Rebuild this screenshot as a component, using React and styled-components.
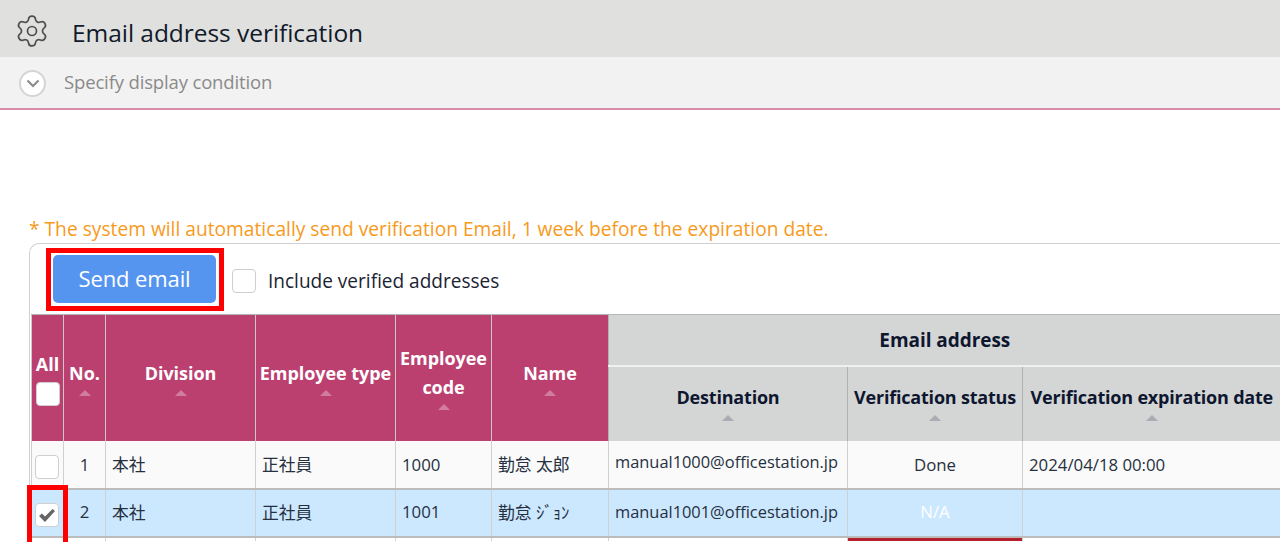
import React from "react";
import styled, { createGlobalStyle } from "styled-components";
import { Settings } from "lucide-react";

const Global = createGlobalStyle`
  html, body { margin: 0; padding: 0; height: 542px; overflow: hidden; background: #fff; }
  body { font-family: "Open Sans", "Noto Sans CJK JP", sans-serif; color: #1b2433; }
  * { box-sizing: border-box; }
`;
const Page = styled.div`width: 1280px; height: 542px; overflow: hidden;`;
const TitleBar = styled.header`
  height: 57px; background: #e0e0de; display: flex; align-items: center; padding: 7px 0 0 14px; gap: 22px;
  svg { color: #505050; flex: none; margin-top: -3px; }
`;
const Title = styled.h1`margin: 0; font-size: 24.5px; font-weight: 400; color: #101a2a; letter-spacing: -0.05px;`;
const ConditionBar = styled.div`
  height: 53px; background: #f2f2f2; border-bottom: 2px solid #d98dab; display: flex; align-items: center; padding: 0 0 3px 19px; gap: 18px;
`;
const Toggle = styled.span`
  width: 27px; height: 27px; border-radius: 50%; background: #fff; border: 2px solid #d4d4d4; display: flex; align-items: center; justify-content: center; flex: none; position: relative; top: 2px;
`;
const ConditionText = styled.span`font-size: 18.5px; color: #8a8a8a; letter-spacing: -0.15px;`;
const Content = styled.main`padding: 105px 0 0 29px;`;
const Note = styled.p`margin: 0; height: 28px; font-size: 19.2px; line-height: 28px; color: #f79a1c; white-space: nowrap;`;
const Panel = styled.section`
  width: 1252px; border: 1px solid #d0d0d0; border-radius: 10px 0 0 0; border-bottom: 0; border-right: 0;
`;
const Toolbar = styled.div`height: 70px; display: flex; align-items: center; padding: 0 0 0 16px;`;
const RedFrame = styled.div`border: 5px solid #f00; padding: 2px 3px 3px 2px; width: 178px; height: 63px; display: flex;`;
const SendButton = styled.button`
  flex: 1; border: 0; border-radius: 5px; background: #5595f0; color: #fff; font: inherit; font-size: 22px; letter-spacing: -0.1px; padding: 0 0 1px;
`;
const Box = styled.span`
  display: inline-flex; align-items: center; justify-content: center; width: 24px; height: 24px; background: #fff; border: 1px solid #cfcfcf; border-radius: 4px; flex: none; vertical-align: middle;
`;
const ToolbarBox = styled(Box)`margin: 3px 12px 0 8px;`;
const HeadBox = styled(Box)`display: flex; margin: 3px auto 0;`;
const RowBox = styled(Box)`position: relative; top: ${p => (p.$on ? "3px" : "2px")}; left: -1px;`;
const ToolbarLabel = styled.span`font-size: 19.05px; color: #1b2433; position: relative; top: 2px;`;
const Table = styled.table`
  border-collapse: collapse; table-layout: fixed; width: 1249px; margin-left: 1px;
`;
const Head = styled.th`
  font-size: ${p => (p.$split ? "19px" : "18px")}; font-weight: 700; line-height: 28.5px; padding: 0; text-align: center; vertical-align: middle; white-space: nowrap;
  letter-spacing: ${p => (p.$grey && !p.$split ? "-0.2px" : "-0.05px")};
  background: ${p => (p.$grey ? "#d4d6d5" : "#bb4070")};
  color: ${p => (p.$grey ? "#0e1630" : "#fff")};
  border-left: 1px solid ${p => (p.$grey ? "#b0b0b0" : "#c9c9c9")};
  border-top: 1px solid #b5b5b5;
  border-bottom: ${p => (p.$split ? "2px solid #f0f0f0" : "0")};
  height: ${p => p.$h}px;
`;
const Sort = styled.i`
  display: block; width: 0; height: 0; margin: 3px auto ${p => (p.$grey ? "3px" : "1px")}; border-left: 6px solid transparent; border-right: 6px solid transparent;
  border-bottom: 6px solid ${p => (p.$grey ? "#aaacb4" : "#d17d9e")};
`;
const Row = styled.tr`
  background: ${p => (p.$on ? "#cce8ff" : "#fafafa")};
  ${p => p.$on && "td { padding-bottom: 2px; }"}
`;
const Cell = styled.td`
  height: 48px; padding: 0 0 0 6px; font-size: 16.8px; white-space: nowrap; color: #26303f; overflow: hidden;
  border-left: 1px solid #d0d0d0; border-bottom: 2px solid #bcbcbc;
  text-align: ${p => (p.$center ? "center" : "left")};
  ${p => p.$center && "padding-left: 0;"}
  ${p => p.$white && "color: #fff;"}
`;
const CheckCell = styled(Cell)`padding: 0; text-align: center; position: relative; overflow: visible;`;
const Mail = styled.span`display: inline-block; position: relative; top: ${p => (p.$raised ? "-3px" : "0")}; font-size: 16.4px;`;
const RedCheck = styled.span`
  position: absolute; left: -5px; top: -5px; width: 41px; height: 62px; border: 5px solid #f00; pointer-events: none;
`;
const Verify = styled.tr`height: 4px;`;
const Stub = styled.td`padding: 0; height: 4px; background: ${p => (p.$red ? "#b3202c" : "transparent")}; border-left: 1px solid #d0d0d0;`;

const cols = [32, 42, 150, 140, 96, 117, 239, 175, 258];
const rows = [
  { n: 1, name: "勤怠 太郎", mail: "manual1000@officestation.jp", code: "1000", st: "Done", date: "2024/04/18 00:00" },
  { n: 2, name: "勤怠 ｼﾞｮﾝ", mail: "manual1001@officestation.jp", code: "1001", st: "N/A", date: "", on: true },
];

export default function App() {
  return (
    <Page>
      <Global />
      <TitleBar>
        <Settings size={36} strokeWidth={1.15} />
        <Title>Email address verification</Title>
      </TitleBar>
      <ConditionBar>
        <Toggle>
          <svg width="14" height="9" viewBox="0 0 14 9" fill="none" stroke="#8c8c8c" strokeWidth="2.2"><path d="M1.5 1.5 7 7l5.5-5.5" /></svg>
        </Toggle>
        <ConditionText>Specify display condition</ConditionText>
      </ConditionBar>
      <Content>
        <Note>* The system will automatically send verification Email, 1 week before the expiration date.</Note>
        <Panel>
          <Toolbar>
            <RedFrame><SendButton>Send email</SendButton></RedFrame>
            <ToolbarBox />
            <ToolbarLabel>Include verified addresses</ToolbarLabel>
          </Toolbar>
          <Table>
            <colgroup>{cols.map((w, i) => <col key={i} style={{ width: w }} />)}</colgroup>
            <thead>
              <tr>
                <Head rowSpan={2}>All<HeadBox /></Head>
                <Head rowSpan={2}>No.<Sort /></Head>
                <Head rowSpan={2}>Division<Sort /></Head>
                <Head rowSpan={2}>Employee type<Sort /></Head>
                <Head rowSpan={2}>Employee<br />code<Sort /></Head>
                <Head rowSpan={2}>Name<Sort /></Head>
                <Head colSpan={3} $grey $split $h={51}>Email address</Head>
              </tr>
              <tr>
                <Head $grey $h={75}>Destination<Sort $grey /></Head>
                <Head $grey $h={75}>Verification status<Sort $grey /></Head>
                <Head $grey $h={75}>Verification expiration date<Sort $grey /></Head>
              </tr>
            </thead>
            <tbody>
              {rows.map(r => (
                <Row key={r.n} $on={r.on}>
                  <CheckCell>
                    <RowBox $on={r.on}>
                      {r.on && <svg width="20" height="18" viewBox="0 0 20 18"><path d="M2 10 5 7.5l3 3L15.5 3 18 5 8 16z" fill="#666" /></svg>}
                    </RowBox>
                    {r.on && <RedCheck />}
                  </CheckCell>
                  <Cell $center>{r.n}</Cell>
                  <Cell>本社</Cell>
                  <Cell>正社員</Cell>
                  <Cell>{r.code}</Cell>
                  <Cell>{r.name}</Cell>
                  <Cell><Mail $raised={!r.on}>{r.mail}</Mail></Cell>
                  <Cell $center $white={r.on}>{r.st}</Cell>
                  <Cell>{r.date}</Cell>
                </Row>
              ))}
              <Verify>
                {cols.map((_, i) => <Stub key={i} $red={i === 7} />)}
              </Verify>
            </tbody>
          </Table>
        </Panel>
      </Content>
    </Page>
  );
}
